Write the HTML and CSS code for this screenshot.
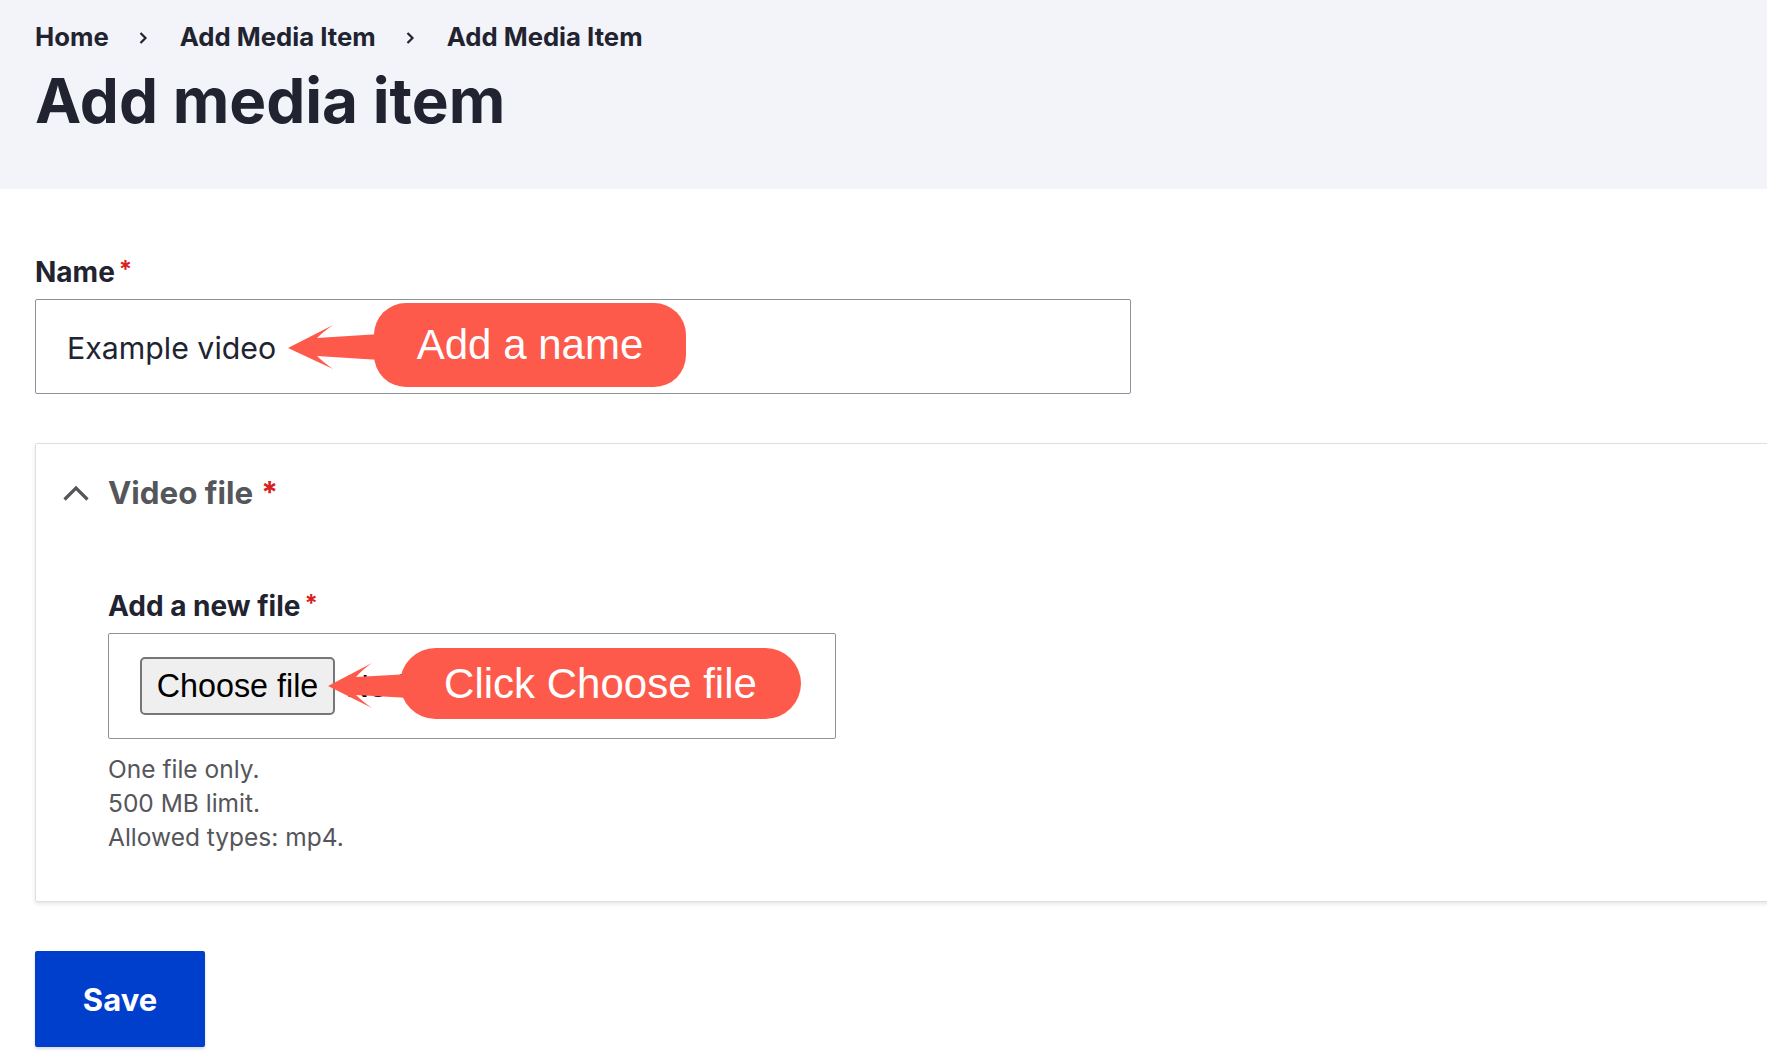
FILE: index.html
```html
<!DOCTYPE html>
<html lang="en">
<head>
<meta charset="utf-8">
<title>Add media item</title>
<link rel="stylesheet" href="styles.css">
</head>
<body>
<header class="page-header">
  <nav class="breadcrumb">
    <a class="crumb">Home</a>
    <span class="sep"><svg width="10" height="14" viewBox="0 0 10 14"><path d="M2.5 2 L7.5 7 L2.5 12" fill="none" stroke="#222330" stroke-width="2.2"/></svg></span>
    <a class="crumb">Add Media Item</a>
    <span class="sep"><svg width="10" height="14" viewBox="0 0 10 14"><path d="M2.5 2 L7.5 7 L2.5 12" fill="none" stroke="#222330" stroke-width="2.2"/></svg></span>
    <a class="crumb">Add Media Item</a>
  </nav>
  <h1 class="page-title">Add media item</h1>
</header>
<main class="content">
  <div class="form-item">
    <label class="form-label">Name<span class="req">*</span></label>
    <div class="text-input">
      <span class="input-value">Example video</span>
      <svg class="arrow arrow-name" width="100" height="55" viewBox="0 0 100 55">
        <path d="M3 28 L48 5 Q38 12 32 18 L95 14 L95 40 L32 36 Q38 42 48 49 Z" fill="#fd5a4c"/>
      </svg>
      <div class="callout callout-name">Add a name</div>
    </div>
  </div>

  <section class="details">
    <div class="summary">
      <svg class="chevron" width="28" height="18" viewBox="0 0 28 18"><path d="M2.5 15.5 L14 4 L25.5 15.5" fill="none" stroke="#55565b" stroke-width="3.2"/></svg>
      <span class="summary-title">Video file</span>
      <span class="req-lg">*</span>
    </div>
    <div class="details-body">
      <label class="form-label">Add a new file<span class="req">*</span></label>
      <div class="file-widget">
        <span class="file-button">Choose file</span>
        <span class="file-status">No file chosen</span>
        <svg class="arrow arrow-file" width="90" height="55" viewBox="0 0 90 55">
          <path d="M3 27 L47 4 Q37 11 31 18 L85 15 L85 39 L31 36 Q37 42 47 49 Z" fill="#fd5a4c"/>
        </svg>
        <div class="callout callout-file">Click Choose file</div>
      </div>
      <div class="help">
        <div>One file only.</div>
        <div>500 MB limit.</div>
        <div>Allowed types: mp4.</div>
      </div>
    </div>
  </section>

  <button class="save" type="button">Save</button>
</main>
</body>
</html>
```

FILE: styles.css
```css
html, body {
  margin: 0;
  padding: 0;
  background: #ffffff;
  overflow: hidden;
}

body {
  font-family: Inter, "Noto Sans", sans-serif;
  color: #222330;
  width: 1767px;
  height: 1061px;
}

.page-header {
  background: #f3f4f9;
  padding: 21px 35px 52px;
}

.breadcrumb {
  display: flex;
  align-items: center;
  height: 32px;
  font-size: 25.7px;
  font-weight: 700;
  line-height: 32px;
}

.crumb {
  color: #222330;
}

.sep {
  display: flex;
  align-items: center;
  margin: 0 32px 0 29px;
  padding-top: 2px;
}

.page-title {
  margin: 12px 0 0;
  font-size: 62px;
  font-weight: 700;
  line-height: 72px;
  letter-spacing: 0;
  color: #222330;
}

.content {
  padding: 66px 0 0 35px;
}

.form-label {
  display: block;
  font-size: 28px;
  font-weight: 700;
  line-height: 34px;
  color: #222330;
}

.req {
  color: #d72222;
  font-size: 24px;
  vertical-align: top;
  line-height: 30px;
  margin-left: 4px;
}

.text-input {
  position: relative;
  margin-top: 10px;
  width: 1096px;
  height: 95px;
  box-sizing: border-box;
  border: 1.5px solid #8e929c;
  border-radius: 2px;
  display: flex;
  align-items: center;
  padding-left: 31px;
}

.input-value {
  font-size: 30.3px;
  color: #222330;
  padding-top: 2px;
}

.arrow {
  position: absolute;
}

.arrow-name {
  left: 249px;
  top: 20px;
}

.callout {
  position: absolute;
  background: #fd5a4c;
  color: #ffffff;
  font-family: "Liberation Sans", Arial, sans-serif;
  font-size: 42px;
  display: flex;
  align-items: center;
  justify-content: center;
  box-sizing: border-box;
}

.callout-name {
  left: 338px;
  top: 3px;
  width: 312px;
  height: 84px;
  border-radius: 32px;
}

.details {
  margin-top: 49px;
  margin-right: -60px;
  border: 1px solid #dedfe4;
  border-radius: 2px;
  box-shadow: 0 2px 4px rgba(0, 0, 0, 0.1);
  padding: 29px 0 47px;
}

.summary {
  display: flex;
  align-items: center;
  height: 40px;
  padding-left: 26px;
  color: #55565b;
}

.chevron {
  margin-right: 18px;
  margin-top: -1px;
}

.summary-title {
  font-size: 31.3px;
  font-weight: 700;
  line-height: 40px;
}

.req-lg {
  color: #d72222;
  font-size: 30px;
  font-weight: 700;
  margin-left: 8px;
  align-self: flex-start;
  line-height: 30px;
  margin-top: 4px;
}

.details-body {
  padding: 76px 0 0 72px;
}

.file-widget {
  position: relative;
  margin-top: 10px;
  width: 728px;
  height: 106px;
  box-sizing: border-box;
  border: 1.5px solid #8e929c;
  border-radius: 2px;
  display: flex;
  align-items: center;
  padding-left: 31px;
}

.file-button {
  display: flex;
  align-items: center;
  justify-content: center;
  width: 195px;
  height: 58px;
  box-sizing: border-box;
  background: #efefef;
  border: 2px solid #767676;
  border-radius: 5px;
  font-family: "Liberation Sans", Arial, sans-serif;
  font-size: 32.3px;
  color: #000000;
}

.file-status {
  margin-left: 11px;
  font-family: "Liberation Sans", Arial, sans-serif;
  font-size: 32px;
  color: #000000;
}

.arrow-file {
  left: 216px;
  top: 25px;
}

.callout-file {
  left: 291px;
  top: 14px;
  width: 401px;
  height: 71px;
  border-radius: 36px;
}

.help {
  margin-top: 13px;
  font-size: 24.5px;
  line-height: 34px;
  color: #55565b;
}

.save {
  margin-top: 49px;
  width: 170px;
  height: 96px;
  border: none;
  border-radius: 2px;
  background: #003ecc;
  color: #ffffff;
  font-family: Inter, "Noto Sans", sans-serif;
  font-size: 31px;
  font-weight: 700;
  box-shadow: 0 2px 3px rgba(0, 0, 0, 0.15);
  padding: 0;
}
```
